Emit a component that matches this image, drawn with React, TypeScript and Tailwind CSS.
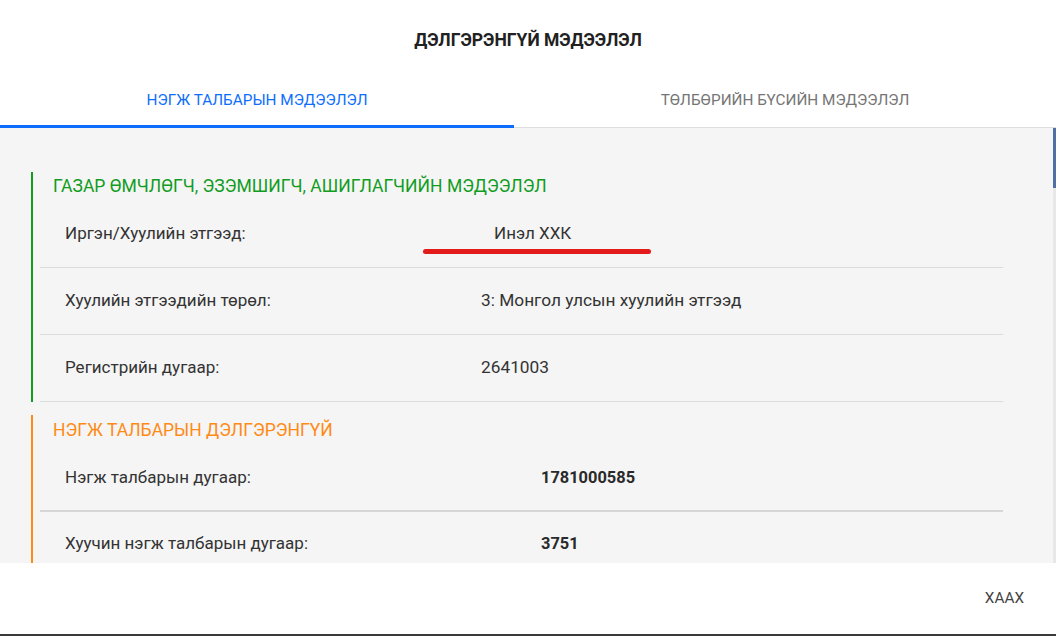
import React from 'react';

type Row = { label: string; value: string; bold?: boolean; mark?: boolean };

const ownerRows: Row[] = [
  { label: 'Иргэн/Хуулийн этгээд:', value: 'Инэл ХХК', mark: true },
  { label: 'Хуулийн этгээдийн төрөл:', value: '3: Монгол улсын хуулийн этгээд' },
  { label: 'Регистрийн дугаар:', value: '2641003' },
];

const parcelRows: Row[] = [
  { label: 'Нэгж талбарын дугаар:', value: '1781000585', bold: true },
  { label: 'Хуучин нэгж талбарын дугаар:', value: '3751', bold: true },
];

const font = { fontFamily: 'Roboto, "Liberation Sans", sans-serif' };

const App = () => {
  return (
    <div
      className="flex h-[636px] w-[1056px] flex-col overflow-hidden border-b-2 border-[#3a3a3a] bg-white text-[17px] text-[#333]"
      style={font}
    >
      <div className="flex h-[73px] shrink-0 items-center justify-center pt-[8px]">
        <h2 className="text-[17.5px] font-bold text-[#212121]">ДЭЛГЭРЭНГҮЙ МЭДЭЭЛЭЛ</h2>
      </div>

      <div className="flex h-[55px] shrink-0 text-[15.3px]">
        <div className="flex w-[514px] shrink-0 items-center justify-center border-b-[3px] border-[#0d6efd] pt-[2px] text-[#0d6efd]">
          НЭГЖ ТАЛБАРЫН МЭДЭЭЛЭЛ
        </div>
        <div className="flex flex-1 items-center justify-center border-b border-[#dedede] pt-[1px] text-[#757575]">
          ТӨЛБӨРИЙН БҮСИЙН МЭДЭЭЛЭЛ
        </div>
      </div>

      <div className="relative flex-1 overflow-hidden bg-[#f5f5f5] pl-[31px] pt-[44px]">
        <div className="absolute right-0 top-0 h-full w-[3px] bg-[#e8e8e8]">
          <div className="h-[60px] w-full bg-[#4f6fa6]" />
        </div>

        <section className="w-[972px] border-l-2 border-[#119c22]">
          <h3 className="flex h-[29px] items-center pl-[20px] text-[17.5px] text-[#119c22]">
            ГАЗАР ӨМЧЛӨГЧ, ЭЗЭМШИГЧ, АШИГЛАГЧИЙН МЭДЭЭЛЭЛ
          </h3>
          <div className="ml-[7px] w-[963px]">
            {ownerRows.map((row) => (
              <div key={row.label} className="flex h-[67px] items-center border-b border-[#dcdcdc] pl-[25px]">
                <span className="w-[416px] shrink-0">{row.label}</span>
                {row.mark ? (
                  <span className="relative pl-[13px]">
                    {row.value}
                    <span className="absolute left-[-58px] top-[28px] h-[5px] w-[228px] rounded-full bg-[#e31b1b]" />
                  </span>
                ) : (
                  <span className="text-[17.3px]">{row.value}</span>
                )}
              </div>
            ))}
          </div>
        </section>

        <section className="mt-[13px] w-[972px] border-l-2 border-[#ff8a16]">
          <h3 className="flex h-[31px] items-center pl-[20px] text-[17.5px] text-[#ff8a16]">
            НЭГЖ ТАЛБАРЫН ДЭЛГЭРЭНГҮЙ
          </h3>
          <div className="ml-[7px] w-[963px]">
            {parcelRows.map((row) => (
              <div key={row.label} className="flex h-[66px] items-center border-b-2 border-[#d6d6d6] pl-[25px]">
                <span className="w-[476px] shrink-0">{row.label}</span>
                <span className={row.bold ? 'text-[16.4px] font-bold text-[#2a2a2a]' : ''}>{row.value}</span>
              </div>
            ))}
          </div>
        </section>
      </div>

      <div className="flex h-[71px] shrink-0 items-center justify-end pr-[32px]">
        <button className="text-[15.3px] uppercase text-[#444]">ХААХ</button>
      </div>
    </div>
  );
};

export default App;
